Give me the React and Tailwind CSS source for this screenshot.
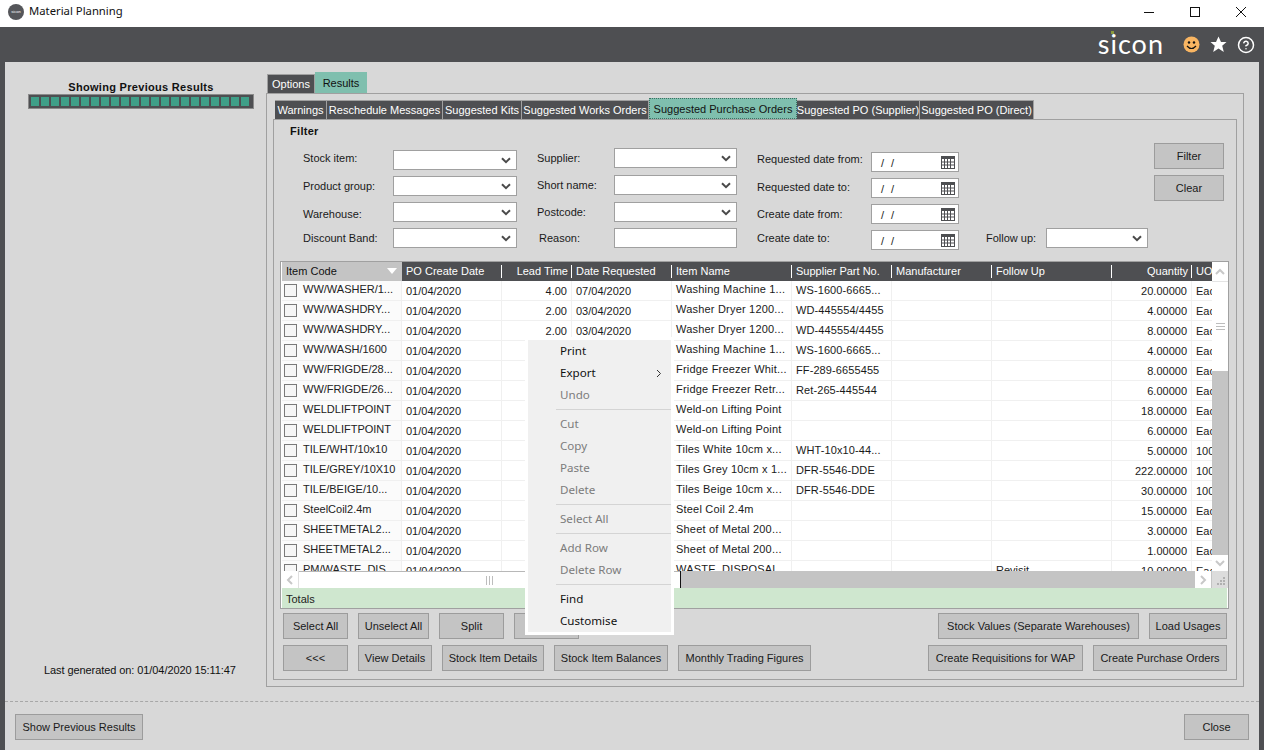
import React from "react";
import { CircleHelp } from "lucide-react";

const Chevron = () => (
  <svg width="10" height="7" viewBox="0 0 10 7" className="shrink-0">
    <path d="M1 1.2 L5 5.2 L9 1.2" fill="none" stroke="#4a4a4a" strokeWidth="2" />
  </svg>
);

const Calendar = () => (
  <svg width="14" height="13" viewBox="0 0 14 13" className="shrink-0">
    <rect x="0.5" y="0.5" width="13" height="12" fill="#fff" stroke="#4e4f52" />
    <rect x="0" y="0" width="14" height="3" fill="#4e4f52" />
    <path d="M3.5 3V13M6.5 3V13M9.5 3V13M0 6H14M0 9H14" stroke="#4e4f52" strokeWidth="1" />
  </svg>
);

const Select = ({ w }) => (
  <div className={`${w} h-5 bg-white border border-[#a0a0a0] flex items-center justify-end pr-[5px] shrink-0`}>
    <Chevron />
  </div>
);

const Field = ({ label, lw, w, cls = "", input }) => (
  <div className="flex items-center h-5">
    <div className={`${lw} ${cls} shrink-0 whitespace-nowrap`}>{label}</div>
    {input ? <div className={`${w} h-5 bg-white border border-[#a0a0a0] shrink-0`} /> : <Select w={w} />}
  </div>
);

const DateField = ({ label, cls = "" }) => (
  <div className="flex items-center h-5">
    <div className={`w-[114px] ${cls} shrink-0 whitespace-nowrap`}>{label}</div>
    <div className="w-[88px] h-5 bg-white border border-[#a0a0a0] flex items-center justify-between pl-[9px] pr-[3px] shrink-0">
      <span className="pt-[2px] text-[#222] tracking-[2px]">/ /</span>
      <Calendar />
    </div>
  </div>
);

const Btn = ({ w, children }) => (
  <div className={`${w} h-[26px] shrink-0 bg-[#c4c4c4] border border-[#9c9c9c] flex items-center justify-center whitespace-nowrap text-[#1a1a1a]`}>
    {children}
  </div>
);

const Tab = ({ w, children, active }) =>
  active ? (
    <div className={`${w} h-[21px] shrink-0 bg-[#7fbfae] border border-dotted border-[#3c6f62] flex items-center justify-center text-[#111] whitespace-nowrap pt-px`}>
      {children}
    </div>
  ) : (
    <div className={`${w} h-[19px] shrink-0 bg-[#4e4f52] border border-[#a0a0a0] border-b-0 border-l-0 flex items-center justify-center text-white whitespace-nowrap`}>
      {children}
    </div>
  );

const headers = [
  ["w-[100px] pl-1", "PO Create Date"],
  ["w-[70px] pr-1 text-right", "Lead Time"],
  ["w-[100px] pl-1", "Date Requested"],
  ["w-[120px] pl-1", "Item Name"],
  ["w-[100px] pl-1", "Supplier Part No."],
  ["w-[100px] pl-1", "Manufacturer"],
  ["w-[120px] pl-1", "Follow Up"],
  ["w-[80px] pr-1 text-right", "Quantity"],
  ["w-[20px] pl-1", "UOM"],
];

const rows = [
  ["WW/WASHER/1...", "4.00", "07/04/2020", "Washing Machine 1...", "WS-1600-6665...", "", "20.00000", "Eac"],
  ["WW/WASHDRY...", "2.00", "03/04/2020", "Washer Dryer 1200...", "WD-445554/4455", "", "4.00000", "Eac"],
  ["WW/WASHDRY...", "2.00", "03/04/2020", "Washer Dryer 1200...", "WD-445554/4455", "", "8.00000", "Eac"],
  ["WW/WASH/1600", "", "", "Washing Machine 1...", "WS-1600-6665...", "", "4.00000", "Eac"],
  ["WW/FRIGDE/28...", "", "", "Fridge Freezer Whit...", "FF-289-6655455", "", "8.00000", "Eac"],
  ["WW/FRIGDE/26...", "", "", "Fridge Freezer Retr...", "Ret-265-445544", "", "6.00000", "Eac"],
  ["WELDLIFTPOINT", "", "", "Weld-on Lifting Point", "", "", "18.00000", "Eac"],
  ["WELDLIFTPOINT", "", "", "Weld-on Lifting Point", "", "", "6.00000", "Eac"],
  ["TILE/WHT/10x10", "", "", "Tiles White 10cm x...", "WHT-10x10-44...", "", "5.00000", "100"],
  ["TILE/GREY/10X10", "", "", "Tiles Grey 10cm x 1...", "DFR-5546-DDE", "", "222.00000", "100"],
  ["TILE/BEIGE/10...", "", "", "Tiles Beige 10cm x...", "DFR-5546-DDE", "", "30.00000", "100"],
  ["SteelCoil2.4m", "", "", "Steel Coil 2.4m", "", "", "15.00000", "Eac"],
  ["SHEETMETAL2...", "", "", "Sheet of Metal 200...", "", "", "3.00000", "Eac"],
  ["SHEETMETAL2...", "", "", "Sheet of Metal 200...", "", "", "1.00000", "Eac"],
  ["PM/WASTE_DIS...", "", "", "WASTE_DISPOSAL", "", "Revisit", "10.00000", "Eac"],
];

const Row = ({ r }) => (
  <div className="flex h-5 shrink-0 border-b border-[#f0f0f0] bg-white text-[#1a1a1a] whitespace-nowrap overflow-hidden">
    <div className="w-[120px] shrink-0 flex items-center pl-[2px] border-r border-[#f0f0f0] bg-[#fbfbfb]">
      <div className="w-[13px] h-[13px] border border-[#7a7a7a] bg-[#f6f6f6] shrink-0" />
      <span className="ml-[6px] pb-[2px] text-[#222]">{r[0]}</span>
    </div>
    <div className="w-[100px] shrink-0 pl-1 pt-[2px] border-r border-[#f0f0f0]">01/04/2020</div>
    <div className="w-[70px] shrink-0 pr-1 pt-[2px] text-right border-r border-[#f0f0f0]">{r[1]}</div>
    <div className="w-[100px] shrink-0 pl-1 pt-[2px] border-r border-[#f0f0f0]">{r[2]}</div>
    <div className="w-[120px] shrink-0 pl-1 border-r border-[#f0f0f0] tracking-[0.2px]">{r[3]}</div>
    <div className="w-[100px] shrink-0 pl-1 pt-px border-r border-[#f0f0f0] tracking-[0.1px]">{r[4]}</div>
    <div className="w-[100px] shrink-0 border-r border-[#f0f0f0]" />
    <div className="w-[120px] shrink-0 pl-1 pt-px border-r border-[#f0f0f0]">{r[5]}</div>
    <div className="w-[80px] shrink-0 pr-1 pt-[2px] text-right border-r border-[#f0f0f0]">{r[6]}</div>
    <div className="w-[20px] shrink-0 pl-1 pt-[2px] overflow-hidden">{r[7]}</div>
  </div>
);

const ScrollArrow = ({ d }) => (
  <svg width="10" height="10" viewBox="0 0 10 10">
    <path d={d} fill="none" stroke="#c8c8c8" strokeWidth="2" />
  </svg>
);

const Item = ({ children, off, arrow }) => (
  <div className={`h-[22px] pl-[32px] pr-[9px] flex items-center justify-between ${off ? "text-[#7c7c7c]" : "text-[#111]"}`}>
    <span>{children}</span>
    {arrow && (
      <svg width="6" height="9" viewBox="0 0 6 9">
        <path d="M1 1 L4.5 4.5 L1 8" fill="none" stroke="#333" strokeWidth="1" />
      </svg>
    )}
  </div>
);
const Sep = () => (
  <div className="h-[7px] flex items-center pl-[28px]">
    <div className="h-px w-full bg-[#d4d4d4]" />
  </div>
);

export default function App() {
  return (
    <div className="relative w-[1264px] h-[750px] overflow-hidden bg-[#4e4f52] flex flex-col font-['Liberation_Sans',Arial,sans-serif] text-[11px] text-[#1a1a1a]">
      {/* title bar */}
      <div className="h-[27px] shrink-0 bg-white flex items-center pl-2 pb-[4px]">
        <div className="w-4 h-4 rounded-full bg-[#55565a] flex items-center justify-center text-[4px] text-white">sicon</div>
        <div className="ml-[5px] text-[11.3px] text-[#111] font-['Noto_Sans',sans-serif]">Material Planning</div>
        <div className="ml-auto flex items-center h-full">
          <svg width="12" height="12" viewBox="0 0 12 12" className="mr-[34px]"><path d="M1 6.5H11" stroke="#111" strokeWidth="1" /></svg>
          <svg width="12" height="12" viewBox="0 0 12 12" className="mr-[34px]"><rect x="1.5" y="1.5" width="9" height="9" fill="none" stroke="#111" /></svg>
          <svg width="12" height="12" viewBox="0 0 12 12" className="mr-[17px]"><path d="M1 1L11 11M11 1L1 11" stroke="#111" strokeWidth="1" /></svg>
        </div>
      </div>

      {/* header */}
      <div className="h-[35px] shrink-0 flex items-center justify-end pr-[9px]">
        <div className="relative mr-[19px] text-[27px] leading-none text-white font-['Lato',sans-serif] font-normal pb-[2px] tracking-[1px]">
          sicon
          <div className="absolute left-[13px] top-[1px] w-[3px] h-[3px] bg-[#8a9a3c]" />
        </div>
        <svg width="17" height="17" viewBox="0 0 17 17" className="mr-[10px]">
          <circle cx="8.5" cy="8.5" r="8" fill="#f8b562" />
          <circle cx="6" cy="6.5" r="1.2" fill="#111" />
          <circle cx="11" cy="6.5" r="1.2" fill="#111" />
          <path d="M4 10 Q8.5 15 13 10" fill="none" stroke="#111" strokeWidth="1.2" />
        </svg>
        <svg width="17" height="17" viewBox="0 0 17 17" className="mr-[10px]">
          <path d="M8.5 0.5L11 6H16.5L12.2 9.7L13.8 16L8.5 12.6L3.2 16L4.8 9.7L0.5 6H6Z" fill="#fff" />
        </svg>
        <CircleHelp size={18} color="#fff" strokeWidth={2} />
      </div>

      {/* main */}
      <div className="flex-1 mx-[5px] bg-[#d8d8d8] flex flex-col min-h-0">
        <div className="h-[640px] shrink-0 flex border-b border-dashed border-[#a8a8a8]">
          {/* sidebar */}
          <div className="w-[261px] shrink-0 flex flex-col">
            <div className="mt-[19px] ml-[23px] w-[226px] text-center font-bold tracking-[0.3px] text-[11px] leading-[13px] text-[#111]">
              Showing Previous Results
            </div>
            <div className="ml-[23px] w-[226px] h-[15px] bg-[#4e4f52] border border-[#8a8a8a] flex items-center gap-[2px] pl-[2px]">
              {Array.from({ length: 22 }).map((_, i) => (
                <div key={i} className="w-2 h-[9px] bg-[#3f9f88]" />
              ))}
            </div>
            <div className="mt-[553px] ml-[39px] whitespace-nowrap text-[#111] tracking-[-0.08px]">Last generated on: 01/04/2020 15:11:47</div>
          </div>

          {/* tabs */}
          <div className="flex flex-col pt-[10px]">
            <div className="flex items-end h-[21px] pl-px">
              <div className="w-[48px] h-[19px] bg-[#4e4f52] text-white border border-[#a0a0a0] border-b-0 flex items-center justify-center">Options</div>
              <div className="w-[52px] h-[21px] bg-[#7fbfae] text-[#111] flex items-center justify-center pt-px">Results</div>
            </div>
            <div className="w-[978px] h-[594px] border border-[#a0a0a0] pt-[4px] px-[6px] flex flex-col">
              <div className="flex items-end h-[21px] pl-[2px] shrink-0">
                <Tab w="w-[52px]">Warnings</Tab>
                <Tab w="w-[116px]">Reschedule Messages</Tab>
                <Tab w="w-[79px]">Suggested Kits</Tab>
                <Tab w="w-[127px]">Suggested Works Orders</Tab>
                <Tab w="w-[148px]" active>Suggested Purchase Orders</Tab>
                <Tab w="w-[123px]">Suggested PO (Supplier)</Tab>
                <Tab w="w-[114px]">Suggested PO (Direct)</Tab>
              </div>
              <div className="w-[964px] h-[561px] border border-[#a0a0a0] flex flex-col">
                {/* filter */}
                <div className="h-[23px] shrink-0 pl-4 pt-[3px] font-bold text-[#111] tracking-[0.3px]">Filter</div>
                <div className="h-[118px] shrink-0 flex">
                  <div className="ml-[29px] mt-[7px] flex flex-col gap-[6px]">
                    <Field label="Stock item:" lw="w-[90px]" w="w-[124px]" cls="pb-[4px]" />
                    <Field label="Product group:" lw="w-[90px]" w="w-[124px]" />
                    <Field label="Warehouse:" lw="w-[90px]" w="w-[124px]" cls="pt-[4px]" />
                    <Field label="Discount Band:" lw="w-[90px]" w="w-[124px]" />
                  </div>
                  <div className="ml-5 mt-[5px] flex flex-col gap-[7px]">
                    <Field label="Supplier:" lw="w-[77px]" w="w-[123px]" />
                    <Field label="Short name:" lw="w-[77px]" w="w-[123px]" />
                    <Field label="Postcode:" lw="w-[77px]" w="w-[123px]" />
                    <div className="-mt-px">
                      <Field label="Reason:" lw="w-[77px] pl-[2px]" w="w-[123px]" input />
                    </div>
                  </div>
                  <div className="ml-5 mt-[9px] flex flex-col gap-[6px]">
                    <DateField label="Requested date from:" cls="pb-[6px]" />
                    <DateField label="Requested date to:" cls="pb-[2px]" />
                    <DateField label="Create date from:" />
                    <DateField label="Create date to:" cls="pb-[4px]" />
                  </div>
                  <div className="ml-[27px] mt-[85px]">
                    <Field label="Follow up:" lw="w-[60px]" w="w-[102px]" />
                  </div>
                  <div className="ml-[6px] flex flex-col gap-[6px]">
                    <Btn w="w-[70px]">Filter</Btn>
                    <Btn w="w-[70px]">Clear</Btn>
                  </div>
                </div>

                {/* grid */}
                <div className="ml-[6px] w-[949px] h-[348px] shrink-0 border border-[#a0a0a0] bg-white px-px flex flex-col">
                  <div className="h-[309px] shrink-0 flex">
                    <div className="w-[930px] shrink-0 flex flex-col overflow-hidden">
                      <div className="h-[19px] shrink-0 flex bg-[#4e4f52] text-white whitespace-nowrap">
                        <div className="w-[120px] shrink-0 bg-[#c4c4c4] text-[#111] pl-1 flex items-center justify-between pr-[5px] pb-px">
                          <span>Item Code</span>
                          <svg width="10" height="6" viewBox="0 0 10 6"><path d="M0 0H10L5 6Z" fill="#fff" /></svg>
                        </div>
                        {headers.map(([c, t], i) => (
                          <div
                            key={t}
                            className={`relative ${c} shrink-0 flex items-center pb-px overflow-hidden ${c.includes("text-right") ? "justify-end" : ""} ${i < headers.length - 1 ? "after:absolute after:right-0 after:top-[3px] after:h-[13px] after:w-px after:bg-white" : ""}`}
                          >
                            {t}
                          </div>
                        ))}
                      </div>
                      {rows.map((r, i) => (
                        <Row key={i} r={r} />
                      ))}
                    </div>
                    <div className="w-4 shrink-0 flex flex-col bg-[#c4c4c4]">
                      <div className="h-[19px] bg-white flex items-center justify-center"><ScrollArrow d="M1 7L5 3L9 7" /></div>
                      <div className="h-[90px] bg-white border-t border-[#e4e4e4] flex items-center justify-center">
                        <div className="w-[9px] h-[7px] border-y border-[#bdbdbd] flex items-center"><div className="w-full h-px bg-[#bdbdbd]" /></div>
                      </div>
                      <div className="h-[184px]" />
                      <div className="h-[16px] bg-white flex items-center justify-center"><ScrollArrow d="M1 3L5 7L9 3" /></div>
                    </div>
                  </div>
                  <div className="h-[17px] shrink-0 flex">
                    <div className="w-[930px] shrink-0 flex bg-[#c4c4c4]">
                      <div className="w-[17px] bg-white flex items-center justify-center border-r border-[#e0e0e0]"><ScrollArrow d="M7 1L3 5L7 9" /></div>
                      <div className="w-[381px] bg-white flex items-center justify-center border-t border-[#b8b8b8]">
                        <div className="w-[7px] h-[9px] border-x border-[#bdbdbd] flex justify-center"><div className="w-px h-full bg-[#bdbdbd]" /></div>
                      </div>
                      <div className="w-px bg-[#111]" />
                      <div className="flex-1" />
                      <div className="w-4 bg-white flex items-center justify-center"><ScrollArrow d="M3 1L7 5L3 9" /></div>
                      <div className="w-px" />
                    </div>
                    <div className="w-4 shrink-0 bg-[#dcdcdc] flex items-end justify-end p-[3px]">
                      <svg width="8" height="8" viewBox="0 0 8 8"><path d="M6 0h2v2H6zM3 3h2v2H3zM6 3h2v2H6zM0 6h2v2H0zM3 6h2v2H3zM6 6h2v2H6z" fill="#b0b0b0" /></svg>
                    </div>
                  </div>
                  <div className="h-5 shrink-0 bg-[#cfe7cf] flex items-center pl-1 pt-[2px] text-[#222]">Totals</div>
                </div>

                {/* buttons */}
                <div className="mt-1 ml-[9px] flex w-[944px] gap-[10px] shrink-0">
                  <Btn w="w-[65px]">Select All</Btn>
                  <Btn w="w-[71px]">Unselect All</Btn>
                  <Btn w="w-[65px]">Split</Btn>
                  <Btn w="w-[65px]"></Btn>
                  <div className="ml-auto" />
                  <Btn w="w-[201px]">Stock Values (Separate Warehouses)</Btn>
                  <Btn w="w-[78px]">Load Usages</Btn>
                </div>
                <div className="mt-[6px] ml-[9px] flex w-[944px] gap-[10px] shrink-0">
                  <Btn w="w-[65px]">&lt;&lt;&lt;</Btn>
                  <Btn w="w-[74px]">View Details</Btn>
                  <Btn w="w-[102px]">Stock Item Details</Btn>
                  <Btn w="w-[114px]">Stock Item Balances</Btn>
                  <Btn w="w-[133px]">Monthly Trading Figures</Btn>
                  <div className="ml-auto" />
                  <Btn w="w-[155px]">Create Requisitions for WAP</Btn>
                  <Btn w="w-[134px]">Create Purchase Orders</Btn>
                </div>
              </div>
            </div>
          </div>
        </div>

        {/* footer */}
        <div className="flex-1 flex justify-between items-start pt-[12px] px-[10px]">
          <Btn w="w-[128px]">Show Previous Results</Btn>
          <Btn w="w-[65px]">Close</Btn>
        </div>
      </div>

      {/* context menu */}
      <div className="absolute left-[525px] top-[337px] w-[149px] h-[298px] border-[3px] border-white bg-[#f0f0f0] font-['Noto_Sans',sans-serif] text-[11.6px]">
        <Item>Print</Item>
        <Item arrow>Export</Item>
        <Item off>Undo</Item>
        <Sep />
        <Item off>Cut</Item>
        <Item off>Copy</Item>
        <Item off>Paste</Item>
        <Item off>Delete</Item>
        <Sep />
        <Item off>Select All</Item>
        <Sep />
        <Item off>Add Row</Item>
        <Item off>Delete Row</Item>
        <Sep />
        <Item>Find</Item>
        <Item>Customise</Item>
      </div>
    </div>
  );
}
